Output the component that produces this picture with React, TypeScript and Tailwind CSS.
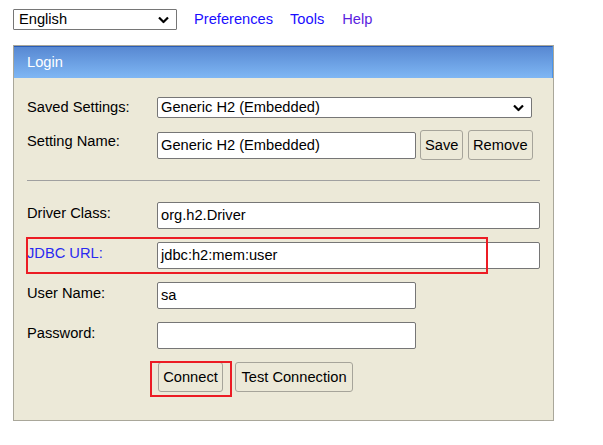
import React from 'react';

const Chevron: React.FC = () => (
  <svg width="11" height="7" viewBox="0 0 11 7" className="absolute right-[7px] top-1/2 -translate-y-1/2">
    <path d="M1 1 L5.5 5.5 L10 1" fill="none" stroke="#000" strokeWidth="2.2" />
  </svg>
);

const Field: React.FC<{ value?: string; width: string }> = ({ value = '', width }) => (
  <div className={`${width} h-[27px] bg-white border border-[#767676] rounded-[2px] pl-[3px] flex items-center text-[14.67px] text-black`}>
    {value}
  </div>
);

const Btn: React.FC<{ label: string; className?: string }> = ({ label, className = '' }) => (
  <div className={`h-[30px] px-[4px] flex items-center border border-[#a6a49a] rounded-[3px] bg-[#ece9d8] text-[14.67px] text-black ${className}`}>
    {label}
  </div>
);

const App: React.FC = () => {
  return (
    <div className="w-[603px] h-[445px] bg-white pt-[9px] pl-[13px] font-['Liberation_Sans',Arial,sans-serif] text-[14.67px] leading-[17px]">
      {/* top bar */}
      <div className="flex items-center h-[21px]">
        <div className="relative w-[164px] h-[21px] border border-[#767676] rounded-[1px] pl-[5px] flex items-center text-black">
          English
          <Chevron />
        </div>
        <span className="ml-[17px] text-[#1a0dff]">Preferences</span>
        <span className="ml-[17px] text-[#1a0dff]">Tools</span>
        <span className="ml-[18px] text-[#5a1ee0]">Help</span>
      </div>

      {/* login panel */}
      <div className="mt-[15px] w-[541px] border border-[#a9a79a] bg-[#ece9d8]">
        <div className="h-[32px] border-t border-[#2a5cb4] border-r-[1px] border-r-[#4b95ec] bg-gradient-to-b from-[#5888d2] to-[#7fb7f4] pl-[13px] flex items-center text-white">
          Login
        </div>

        <div className="pl-[13px] pb-[28px]">
          {/* Saved settings */}
          <div className="mt-[19px] flex items-center h-[21px]">
            <div className="w-[130px] text-black">Saved Settings:</div>
            <div className="relative w-[375px] h-[21px] bg-white border border-[#767676] rounded-[2px] pl-[3px] flex items-center text-black">
              Generic H2 (Embedded)
              <Chevron />
            </div>
          </div>

          {/* Setting name */}
          <div className="mt-[12px] flex items-start h-[30px]">
            <div className="w-[130px] pt-[3px] text-black">Setting Name:</div>
            <div className="mt-[2px]">
              <Field value="Generic H2 (Embedded)" width="w-[259px]" />
            </div>
            <Btn label="Save" className="ml-[4px] w-[43px]" />
            <Btn label="Remove" className="ml-[5px] w-[65px]" />
          </div>

          <div className="mt-[20px] w-[513px] h-px bg-[#a0a0a0]" />

          {/* Driver class */}
          <div className="mt-[21px] flex items-start">
            <div className="w-[130px] pt-[3px] text-black">Driver Class:</div>
            <Field value="org.h2.Driver" width="w-[383px]" />
          </div>

          {/* JDBC URL */}
          <div className="relative mt-[13px] flex items-start">
            <div className="w-[130px] pt-[3px] text-[#2a2af0]">JDBC URL:</div>
            <Field value="jdbc:h2:mem:user" width="w-[383px]" />
            <div className="absolute left-[-1px] top-[-5px] w-[462px] h-[37px] border-2 border-[#ec1c24]" />
          </div>

          {/* User name */}
          <div className="mt-[13px] flex items-start">
            <div className="w-[130px] pt-[3px] text-black">User Name:</div>
            <Field value="sa" width="w-[259px]" />
          </div>

          {/* Password */}
          <div className="mt-[13px] flex items-start">
            <div className="w-[130px] pt-[3px] text-black">Password:</div>
            <Field width="w-[259px]" />
          </div>

          {/* Buttons */}
          <div className="mt-[13px] flex items-start pl-[131px]">
            <div className="relative">
              <Btn label="Connect" className="w-[65px] justify-center" />
              <div className="absolute left-[-8px] top-[-1px] w-[82px] h-[36px] border-2 border-[#ec1c24]" />
            </div>
            <Btn label="Test Connection" className="ml-[12px] w-[118px] justify-center" />
          </div>
        </div>
      </div>
    </div>
  );
};

export default App;
